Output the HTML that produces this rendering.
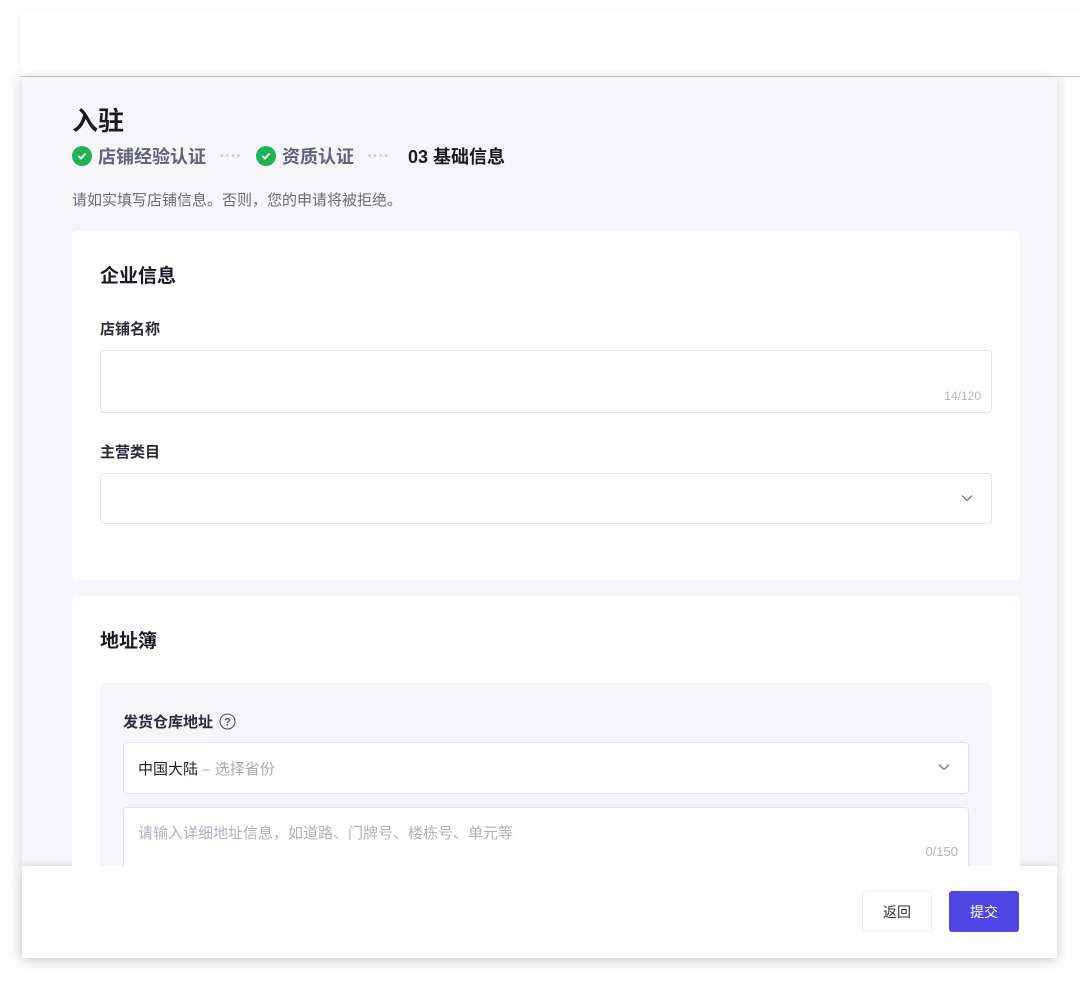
<!DOCTYPE html>
<html><head><meta charset="utf-8"><style>
*{box-sizing:border-box;margin:0;padding:0}
body{width:1080px;height:983px;background:#fff;position:relative;overflow:hidden;font-family:"Liberation Sans","Noto Sans CJK SC",sans-serif;color:#1f1f2e}
.top{position:absolute;left:20px;top:13px;width:1060px;height:64px;background:#fff;border-bottom:1px solid #c9c8d6;box-shadow:0 -2px 6px rgba(0,0,0,.04)}
.main{position:absolute;left:22px;top:77px;width:1035px;height:790px;background:#f6f6fa;box-shadow:5px 0 8px rgba(0,0,0,.08),-6px 0 10px rgba(0,0,0,.09)}
.foot{position:absolute;left:22px;top:866px;width:1035px;height:92px;background:#fff;border-bottom:2px solid #e3e3ea;box-shadow:0 6px 12px rgba(0,0,0,.1),4px 0 8px rgba(0,0,0,.06),-6px 0 10px rgba(0,0,0,.08)}
.abs{position:absolute}
h1{position:absolute;left:72px;top:101px;font-size:26px;font-weight:600;color:#1a1a24}
.steps{position:absolute;left:72px;top:144px;height:24px;display:flex;align-items:center;font-size:18px;font-weight:700}
.ck{width:20px;height:20px;border-radius:50%;background:#22b358;display:inline-flex;align-items:center;justify-content:center;margin-right:6px}
.done{color:#62627a;display:flex;align-items:center}
.dots{color:#c8c8d4;font-size:10px;letter-spacing:2px;margin:0 14px;font-weight:400}
.desc{position:absolute;left:72px;top:189px;font-size:15px;color:#6b6b7c}
.card{position:absolute;left:72px;width:948px;background:#fff;border-radius:6px}
.ct{position:absolute;left:28px;font-size:19px;font-weight:700;color:#1a1a24}
.lb{position:absolute;left:28px;font-size:15px;font-weight:700;color:#2a2a38}
.inp{position:absolute;left:28px;width:892px;background:#fff;border:1px solid #e2e2ea;border-radius:4px}
.cnt{position:absolute;right:10px;bottom:9px;font-size:12px;color:#b4b4c0}
.chev{position:absolute;right:18px;top:50%;margin-top:-5px}
.btn{position:absolute;top:891px;height:41px;border-radius:3px;font-size:14px;display:flex;align-items:center;justify-content:center}
</style></head><body>
<div class="top"></div>
<div class="main"></div>
<div class="foot"></div>
<h1>入驻</h1>
<div class="steps">
<span class="done"><span class="ck"><svg width="10" height="8" viewBox="0 0 10 8"><path d="M1.5 4l2.5 2.5 4.5-5" fill="none" stroke="#fff" stroke-width="1.8"/></svg></span>店铺经验认证</span>
<span class="dots">••••</span>
<span class="done"><span class="ck"><svg width="10" height="8" viewBox="0 0 10 8"><path d="M1.5 4l2.5 2.5 4.5-5" fill="none" stroke="#fff" stroke-width="1.8"/></svg></span>资质认证</span>
<span class="dots">••••</span>
<span style="color:#1a1a24;margin-left:4px">03 基础信息</span>
</div>
<div class="desc">请如实填写店铺信息。否则，您的申请将被拒绝。</div>

<div class="card" style="top:231px;height:349px">
<div class="ct" style="top:30px">企业信息</div>
<div class="lb" style="top:87px">店铺名称</div>
<div class="inp" style="top:119px;height:63px"><span class="cnt">14/120</span></div>
<div class="lb" style="top:210px">主营类目</div>
<div class="inp" style="top:242px;height:51px"><svg class="chev" width="12" height="8" viewBox="0 0 12 8"><path d="M1 1.5l5 5 5-5" fill="none" stroke="#777" stroke-width="1.3"/></svg></div>
</div>

<div class="card" style="top:596px;height:280px">
<div class="ct" style="top:30px">地址簿</div>
<div class="abs" style="left:28px;top:87px;width:892px;height:200px;background:#f6f6fa;border-radius:6px">
<div class="abs" style="left:23px;top:28px;font-size:15px;font-weight:700;color:#2a2a38;display:flex;align-items:center">发货仓库地址<svg style="margin-left:6px" width="17" height="17" viewBox="0 0 17 17"><circle cx="8.5" cy="8.5" r="7.5" fill="none" stroke="#555" stroke-width="1.1"/><text x="8.5" y="12.5" font-size="11" text-anchor="middle" fill="#555" font-family="Liberation Sans">?</text></svg></div>
<div class="abs" style="left:23px;top:59px;width:846px;height:52px;background:#fff;border:1px solid #e2e2ea;border-radius:4px;font-size:15px;padding:15px 14px"><span style="color:#1f1f2e">中国大陆</span><span style="color:#a8a8b6"> – 选择省份</span><svg class="chev" width="12" height="8" viewBox="0 0 12 8"><path d="M1 1.5l5 5 5-5" fill="none" stroke="#777" stroke-width="1.3"/></svg></div>
<div class="abs" style="left:23px;top:124px;width:846px;height:80px;background:#fff;border:1px solid #e2e2ea;border-radius:4px;font-size:15px;padding:14px 14px;color:#b0b0bc">请输入详细地址信息，如道路、门牌号、楼栋号、单元等<span class="abs" style="right:10px;top:36px;font-size:13px;color:#b4b4c0">0/150</span></div>
</div>
</div>
<div class="abs" style="left:22px;top:866px;width:1035px;height:92px;background:#fff"></div>
<div class="btn" style="left:862px;width:70px;border:1px solid #ececf2;background:#fff;color:#333">返回</div>
<div class="btn" style="left:949px;width:70px;background:#4f46e5;color:#fff">提交</div>
</body></html>
